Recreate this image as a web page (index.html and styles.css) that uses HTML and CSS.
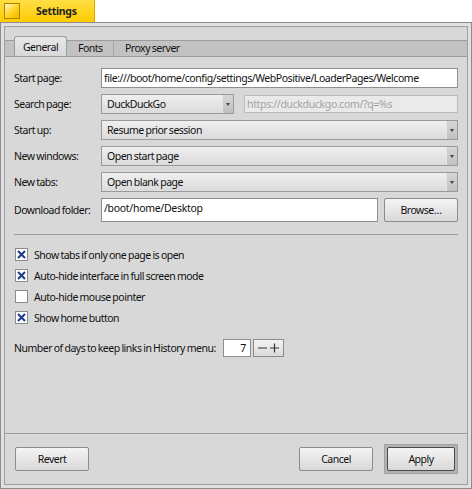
FILE: index.html
```html
<!DOCTYPE html>
<html>
<head>
<meta charset="utf-8">
<link rel="stylesheet" href="styles.css">
</head>
<body>
<div class="titletab"><span class="zoombox"></span><span class="title">Settings</span></div>
<div class="window">
  <div class="content">
    <div class="tabtop"></div>
    <div class="tabstrip">
      <div class="tab active">General</div>
      <div class="tab sepr">Fonts</div>
      <div class="tab">Proxy server</div>
    </div>
    <div class="panel">
      <div class="form">
        <div class="lbl">Start page:</div>
        <div class="field url">file:///boot/home/config/settings/WebPositive/LoaderPages/Welcome</div>

        <div class="lbl">Search page:</div>
        <div class="searchrow">
          <div class="menu small"><span class="mtext">DuckDuckGo</span><span class="marrow"></span></div>
          <div class="field disabled">https://duckduckgo.com/?q=%s</div>
        </div>

        <div class="lbl">Start up:</div>
        <div class="menu"><span class="mtext">Resume prior session</span><span class="marrow"></span></div>

        <div class="lbl">New windows:</div>
        <div class="menu"><span class="mtext">Open start page</span><span class="marrow"></span></div>

        <div class="lbl">New tabs:</div>
        <div class="menu"><span class="mtext">Open blank page</span><span class="marrow"></span></div>

        <div class="lbl">Download folder:</div>
        <div class="dlrow">
          <div class="field tall">/boot/home/Desktop</div>
          <div class="btn">Browse…</div>
        </div>
      </div>

      <div class="sep"></div>

      <div class="checks">
        <div class="check"><span class="box"><svg width="11" height="11" viewBox="0 0 11 11"><path d="M2 2L9 9M9 2L2 9" stroke="#1c3a8c" stroke-width="2"/></svg></span><span>Show tabs if only one page is open</span></div>
        <div class="check"><span class="box"><svg width="11" height="11" viewBox="0 0 11 11"><path d="M2 2L9 9M9 2L2 9" stroke="#1c3a8c" stroke-width="2"/></svg></span><span>Auto-hide interface in full screen mode</span></div>
        <div class="check"><span class="box"></span><span>Auto-hide mouse pointer</span></div>
        <div class="check"><span class="box"><svg width="11" height="11" viewBox="0 0 11 11"><path d="M2 2L9 9M9 2L2 9" stroke="#1c3a8c" stroke-width="2"/></svg></span><span>Show home button</span></div>
      </div>

      <div class="history">
        <span>Number of days to keep links in History menu:</span>
        <div class="numfield">7</div>
        <div class="spin"><svg width="29" height="16" viewBox="0 0 29 16"><path d="M4 8H13M16 8H25M20.5 3.5V12.5" stroke="#333" stroke-width="1.2"/></svg></div>
      </div>
    </div>
    <div class="buttons">
      <div class="btn">Revert</div>
      <div class="spacer"></div>
      <div class="btn cancel">Cancel</div>
      <div class="default"><div class="btn inner">Apply</div></div>
    </div>
  </div>
</div>
</body>
</html>
```
FILE: styles.css
```css
* { box-sizing: border-box; }
body {
  margin: 0;
  width: 472px;
  height: 489px;
  overflow: hidden;
  background: #ffffff;
  font-family: "Noto Sans", "DejaVu Sans", sans-serif;
  font-size: 10.5px;
  letter-spacing: -0.5px;
  word-spacing: -0.5px;
  color: #111;
}
.titletab {
  width: 95px;
  height: 22px;
  background: linear-gradient(#ffdf45, #ffcb00);
  border-right: 1px solid #d9ac00;
  display: flex;
  align-items: center;
}
.zoombox {
  width: 16px;
  height: 16px;
  margin-left: 4px;
  border: 1px solid #a88600;
  background: linear-gradient(135deg, #fff6bf, #ffcf10 60%, #f0b800);
}
.title {
  margin-left: 16px;
  font-weight: bold;
  letter-spacing: -0.3px;
  color: #222;
}
.window {
  height: 467px;
  border: 1px solid #8c8c8c;
  background: #e0e0e0;
  padding: 3px;
}
.content {
  height: 100%;
  border: 1px solid #9e9e9e;
  background: #d8d8d8;
  display: flex;
  flex-direction: column;
}
.tabtop { height: 13px; flex: none; }
.tabstrip {
  flex: none;
  height: 17px;
  border-top: 1px solid #9c9c9c;
  border-bottom: 1px solid #9c9c9c;
  background: #c2c2c2;
  display: flex;
  padding-left: 9px;
}
.tab {
  padding: 0 10px 0 11px;
  line-height: 15px;
  color: #111;
}
.tab.sepr { width: 47px; border-right: 1px solid #a6a6a6; }
.tab.active {
  margin-top: -5px;
  height: 20px;
  width: 53px;
  padding: 2px 0 0;
  text-align: center;
  line-height: 17px;
  border: 1px solid #9c9c9c;
  border-bottom: none;
  border-radius: 3px 3px 0 0;
  background: linear-gradient(#e8e8e8, #d8d8d8);
}
.panel {
  flex: 1;
  padding: 11px 9px 0 9px;
  border-bottom: 1px solid #9c9c9c;
}
.form {
  display: grid;
  grid-template-columns: 87px 1fr;
  grid-template-rows: 20px 20px 20px 20px 20px 24px;
  row-gap: 6px;
}
.lbl { align-self: center; white-space: nowrap; }
.field {
  height: 20px;
  background: #fff;
  border: 1px solid #8e8e8e;
  padding-left: 2px;
  line-height: 18px;
  letter-spacing: -0.3px;
  white-space: nowrap;
  overflow: hidden;
}
.field.url { letter-spacing: -0.45px; }
.field.disabled {
  flex: 1;
  height: 18px;
  margin-top: 1px;
  line-height: 16px;
  letter-spacing: -0.35px;
  background: #eaeaea;
  border-color: #bcbcbc;
  color: #a2a2a2;
}
.field.tall {
  flex: 1;
  height: 24px;
  line-height: 18px;
}
.searchrow { display: flex; gap: 10px; }
.dlrow { display: flex; gap: 6px; }
.menu {
  display: flex;
  height: 20px;
  border: 1px solid #9a9a9a;
  background: linear-gradient(#efefef, #dbdbdb);
}
.menu.small { width: 133px; flex: none; }
.mtext { flex: 1; padding-left: 5px; line-height: 18px; white-space: nowrap; }
.marrow {
  width: 11px;
  background: linear-gradient(#d6d6d6, #c0c0c0);
  border-left: 1px solid #e6e6e6;
  display: flex;
  align-items: center;
  justify-content: center;
}
.marrow::after {
  content: "";
  border-left: 2px solid transparent;
  border-right: 2px solid transparent;
  border-top: 3px solid #444;
}
.btn {
  width: 74px;
  height: 24px;
  flex: none;
  border: 1px solid #8c8c8c;
  border-radius: 2px;
  background: linear-gradient(#f4f4f4, #d9d9d9);
  display: flex;
  align-items: center;
  justify-content: center;
  color: #111;
}
.sep {
  height: 1px;
  background: #9c9c9c;
  margin-top: 12px;
}
.checks { margin-top: 9px; }
.check {
  height: 21px;
  display: flex;
  align-items: center;
}
.box {
  width: 13px;
  height: 13px;
  margin-left: 1px;
  margin-right: 6px;
  background: #fff;
  border: 1px solid #8c8c8c;
  display: flex;
  align-items: center;
  justify-content: center;
}
.box svg { display: block; }
.history {
  margin-top: 10px;
  height: 19px;
  display: flex;
  align-items: center;
}
.numfield {
  width: 28px;
  height: 18px;
  margin-left: 7px;
  background: #fff;
  border: 1px solid #8e8e8e;
  text-align: right;
  padding-right: 4px;
  line-height: 16px;
}
.spin {
  width: 31px;
  height: 18px;
  margin-left: 2px;
  border: 1px solid #8c8c8c;
  background: linear-gradient(#f4f4f4, #d9d9d9);
}
.spin svg { display: block; }
.buttons {
  flex: none;
  height: 50px;
  display: flex;
  align-items: center;
  padding: 0 9px 0 10px;
}
.spacer { flex: 1; }
.cancel { margin-right: 11px; }
.default {
  padding: 2px;
  border: 1px solid #a0a0a0;
  background: #b2b2b2;
}
.btn.inner {
  width: 68px;
  border-color: #4a4a4a;
}
```
